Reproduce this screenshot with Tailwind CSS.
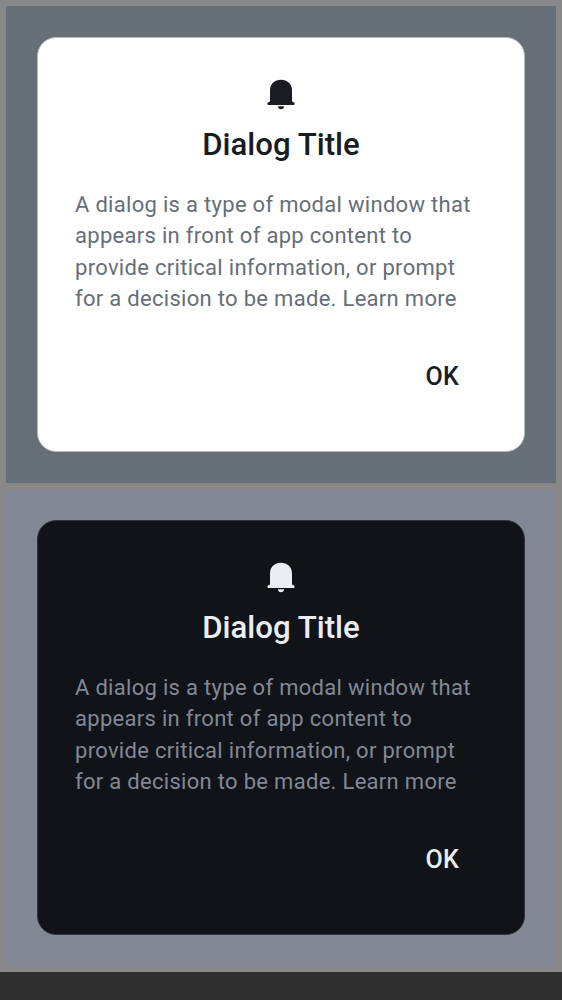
<!DOCTYPE html>
<html lang="en">
<head>
<meta charset="utf-8">
<title>Dialog</title>
<script src="https://cdn.jsdelivr.net/npm/@tailwindcss/browser@4"></script>
</head>
<body class="bg-[#2f2f2f] font-['Roboto',sans-serif]">
<main class="w-[562px] h-[972px] bg-[#888888] p-1.5 flex flex-col gap-[7px]">
<section class="h-[477px] bg-[#666e78] pt-[31px] px-[31px]">
<div class="h-[415px] w-[488px] rounded-[19px] border border-[#b5babf] bg-white text-[#191c22] flex flex-col pt-[41px]">
<svg class="w-[28px] h-[31px] mx-auto" viewBox="0 0 28 31" fill="currentColor"><path d="M14 .7C7.500 .7 3 5 3 11v11.500L.8 23.500Q0 24.600 .8 26h26.400Q28 24.600 27.200 23.500L25 22.500V11C25 5 20.500 .7 14 .7zM11 27.200h6c0 1.800-1.300 3.100-3 3.100s-3-1.300-3-3.100z"/></svg>
<h2 class="mt-[15px] text-center text-[31.200px] leading-[40px] font-medium">Dialog Title</h2>
<p class="mt-[24px] ml-[37px] text-[22px] leading-[31.250px] tracking-[0.3px] text-[#666e78] whitespace-nowrap">A dialog is a type of modal window that<br>appears in front of app content to<br>provide critical information, or prompt<br>for a decision to be made. Learn more</p>
<button class="mt-[47px] mr-[65px] self-end text-[25px] leading-[32px] font-medium tracking-[0.2px]">OK</button>
</div>
</section>
<section class="h-[476px] bg-[#828995] pt-[30px] px-[31px]">
<div class="h-[415px] w-[488px] rounded-[19px] border border-[#30363d] bg-[#101318] text-[#eaedf3] flex flex-col pt-[41px]">
<svg class="w-[28px] h-[31px] mx-auto" viewBox="0 0 28 31" fill="currentColor"><path d="M14 .7C7.500 .7 3 5 3 11v11.500L.8 23.500Q0 24.600 .8 26h26.400Q28 24.600 27.200 23.500L25 22.500V11C25 5 20.500 .7 14 .7zM11 27.200h6c0 1.800-1.300 3.100-3 3.100s-3-1.300-3-3.100z"/></svg>
<h2 class="mt-[15px] text-center text-[31.200px] leading-[40px] font-medium">Dialog Title</h2>
<p class="mt-[24px] ml-[37px] text-[22px] leading-[31.250px] tracking-[0.3px] text-[#828995] whitespace-nowrap">A dialog is a type of modal window that<br>appears in front of app content to<br>provide critical information, or prompt<br>for a decision to be made. Learn more</p>
<button class="mt-[47px] mr-[65px] self-end text-[25px] leading-[32px] font-medium tracking-[0.2px]">OK</button>
</div>
</section>
</main>
</body>
</html>
